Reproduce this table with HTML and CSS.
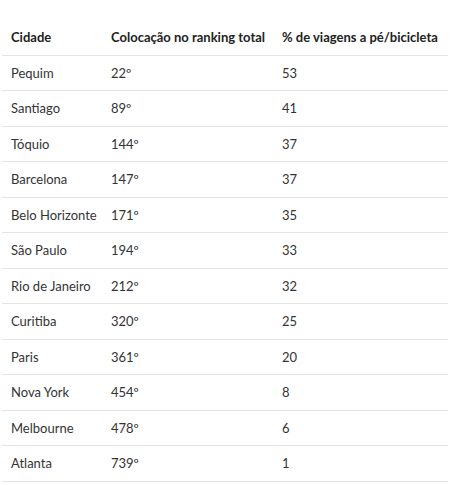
FILE: index.html
```html
<!DOCTYPE html>
<html lang="pt">
<head>
<meta charset="utf-8">
<link rel="stylesheet" href="styles.css">
</head>
<body>
<table class="tbl">
<thead>
<tr><th class="c1">Cidade</th><th class="c2">Colocação no ranking total</th><th class="c3">% de viagens a pé/bicicleta</th></tr>
</thead>
<tbody>
<tr><td>Pequim</td><td>22º</td><td>53</td></tr>
<tr><td>Santiago</td><td>89º</td><td>41</td></tr>
<tr><td>Tóquio</td><td>144º</td><td>37</td></tr>
<tr><td>Barcelona</td><td>147º</td><td>37</td></tr>
<tr><td>Belo Horizonte</td><td>171º</td><td>35</td></tr>
<tr><td>São Paulo</td><td>194º</td><td>33</td></tr>
<tr><td>Rio de Janeiro</td><td>212º</td><td>32</td></tr>
<tr><td>Curitiba</td><td>320º</td><td>25</td></tr>
<tr><td>Paris</td><td>361º</td><td>20</td></tr>
<tr><td>Nova York</td><td>454º</td><td>8</td></tr>
<tr><td>Melbourne</td><td>478º</td><td>6</td></tr>
<tr><td>Atlanta</td><td>739º</td><td>1</td></tr>
</tbody>
</table>
</body>
</html>
```
FILE: styles.css
```css
html, body { margin: 0; padding: 0; background: #fff; }
body { padding: 20px 5px 0 2px; }
.tbl {
  width: 446px;
  border-collapse: collapse;
  font-family: Lato, "Liberation Sans", sans-serif;
  font-size: 13px;
  color: #333;
  table-layout: fixed;
}
.tbl th, .tbl td {
  text-align: left;
  padding: 0 0 0 9px;
  height: 34.5px;
  border-bottom: 1px solid #e4e4e4;
  white-space: nowrap;
}
.tbl th { font-weight: 700; color: #222; }
.c1 { width: 91px; }
.c2 { width: 162px; }
.c3 { width: auto; }
```
